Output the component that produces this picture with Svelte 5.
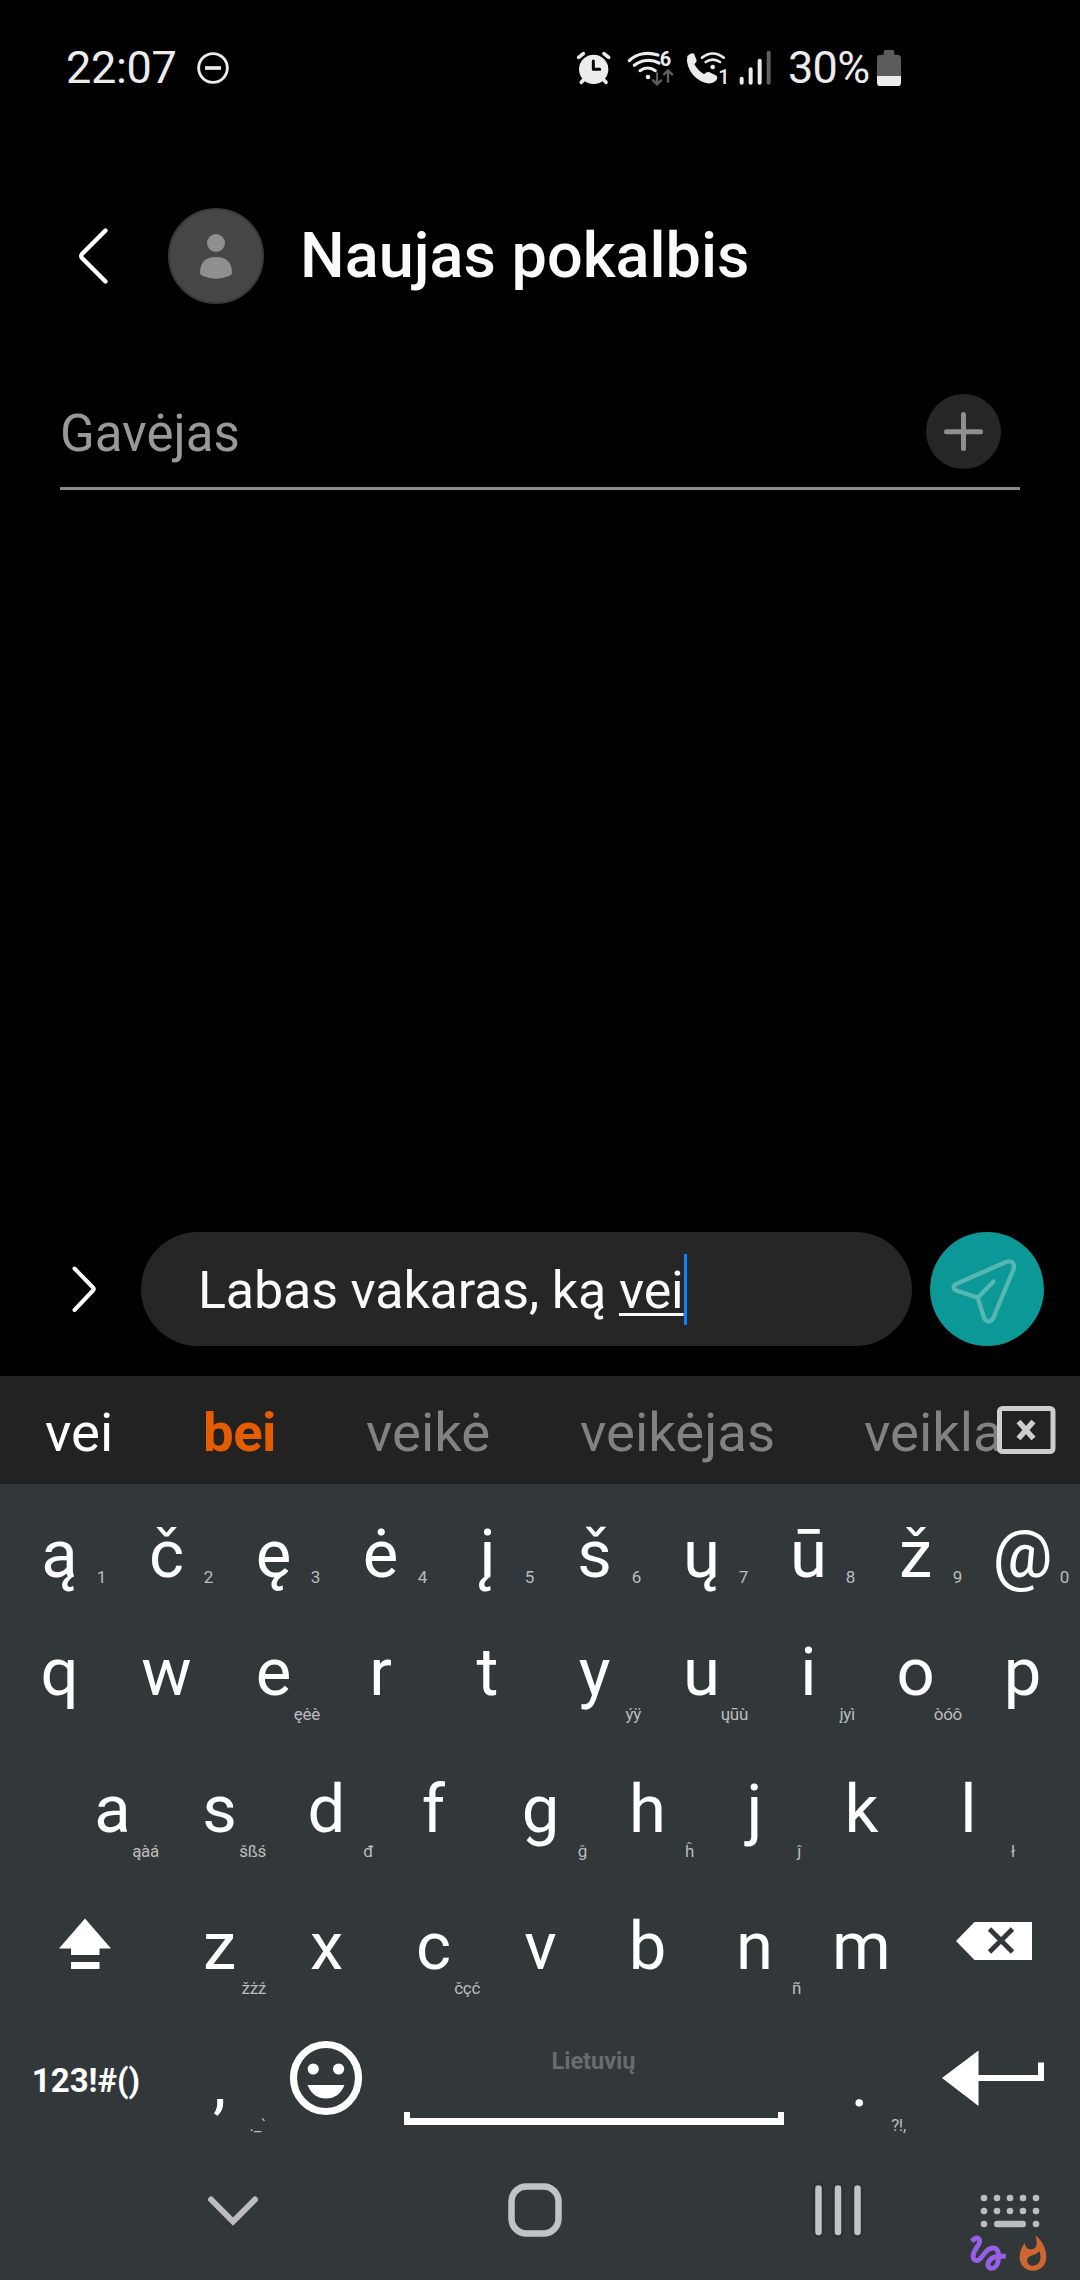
<script>
  const rows = [
    {
      name: 'accents',
      keys: [['ą', '1'], ['č', '2'], ['ę', '3'], ['ė', '4'], ['į', '5'], ['š', '6'], ['ų', '7'], ['ū', '8'], ['ž', '9'], ['@', '0']]
    },
    {
      name: 'top',
      keys: [['q'], ['w'], ['e', 'ęėè'], ['r'], ['t'], ['y', 'ýÿ'], ['u', 'ųūù'], ['i', 'įyì'], ['o', 'òóô'], ['p']]
    },
    {
      name: 'home',
      keys: [['a', 'ąàá'], ['s', 'šßś'], ['d', 'đ'], ['f'], ['g', 'ĝ'], ['h', 'ĥ'], ['j', 'ĵ'], ['k'], ['l', 'ł']]
    }
  ];
  const lower = [['z', 'žżź'], ['x'], ['c', 'čçć'], ['v'], ['b'], ['n', 'ñ'], ['m']];
  const dots = [0, 1, 2, 3, 4];
</script>

{#snippet key(label, hint)}
  <div class="key">
    <span class="letter">{label}</span>
    {#if hint}<span class="hint">{hint}</span>{/if}
  </div>
{/snippet}

<div class="screen">
  <header class="status">
    <span class="time">22:07</span>
    <svg width="45" height="80" viewBox="450 0 135 240">
      <circle cx="519" cy="114" r="43" fill="none" stroke="#ececec" stroke-width="8.5" />
      <path d="M495 114H543" stroke="#ececec" stroke-width="11" />
    </svg>
    <div class="status-right">
      <!-- alarm -->
      <svg width="50" height="80" viewBox="30 0 150 240" fill="none" stroke="#ececec" stroke-linecap="round">
        <circle cx="101" cy="118" r="44" fill="#ececec" stroke="none" />
        <path d="M56 82L70 71M146 82L132 71M64 157L74 146M138 157L128 146" stroke-width="11" />
        <path d="M100 93V118H119" stroke="#000" stroke-width="9" stroke-linejoin="round" />
      </svg>
      <!-- wifi 6 -->
      <svg width="60" height="80" viewBox="180 0 180 240" fill="none" stroke="#ececec" stroke-width="9.5" stroke-linecap="round">
        <path d="M208 92C232 68 266 66 294 75M223 106C243 90 274 86 297 99M240 122C254 112 272 112 286 122" />
        <circle cx="264" cy="141" r="7" fill="#ececec" stroke="none" />
        <text class="six" x="299" y="108" fill="#ececec" stroke="none">6</text>
        <path d="M291 130V162M279 151L291 163L303 151M324 155V122M312 133L324 121L336 133" stroke="#5f5f5f" stroke-width="7" />
      </svg>
      <!-- wifi calling -->
      <svg width="55" height="80" viewBox="360 0 165 240" fill="none" stroke="#ececec" stroke-linecap="round">
        <path d="M382 78Q394 66 402 71L410 91Q411 97 403 103Q413 121 432 133Q440 124 447 126L470 137Q476 145 464 155Q448 166 423 154Q395 139 384 108Q379 92 382 78Z" fill="#ececec" stroke="none" />
        <path d="M426 83Q458 58 491 83M437 96Q458 82 480 96" stroke-width="8" />
        <circle cx="458" cy="111" r="7" fill="#ececec" stroke="none" />
        <text class="one" x="475" y="162" fill="#ececec" stroke="none">1</text>
      </svg>
      <!-- signal -->
      <svg width="50" height="80" viewBox="525 0 150 240" fill="none" stroke="#ececec" stroke-width="12" stroke-linecap="round">
        <path d="M545 146V158M572 118V158M599 92V158" />
        <path d="M626 68V158" stroke="#5f5f5f" />
      </svg>
      <span class="percent">30%</span>
      <svg width="40" height="80" viewBox="930 0 120 240">
        <path d="M976 60H998Q1003 60 1003 66V74H1012Q1023 74 1023 85V140H951V85Q951 74 962 74H971V66Q971 60 976 60Z" fill="#5b5b5b" />
        <path d="M951 138H1023V158Q1023 168 1013 168H961Q951 168 951 158Z" fill="#ececec" />
      </svg>
    </div>
  </header>

  <div class="title-bar">
    <svg class="back" width="36" height="64" viewBox="0 0 36 64" fill="none" stroke="#fafafa" stroke-width="4.4" stroke-linecap="round" stroke-linejoin="round">
      <path d="M30.500 6.500L7 30Q5.500 32 7 34L30.500 57.500" />
    </svg>
    <svg class="avatar" width="96" height="96" viewBox="0 0 96 96">
      <circle cx="48" cy="48" r="47" fill="#464646" stroke="#3a3a3a" stroke-width="2" />
      <circle cx="48" cy="35" r="9" fill="#8f8f8f" />
      <path d="M32 65Q32 49 48 49Q64 49 64 65Q64 67 61 68Q48 73.500 35 68Q32 67 32 65Z" fill="#8f8f8f" />
    </svg>
    <h1>Naujas pokalbis</h1>
  </div>

  <div class="recipient">
    <span>Gavėjas</span>
    <svg width="75" height="75" viewBox="0 0 75 75">
      <circle cx="37.500" cy="37.500" r="37.500" fill="#262626" />
      <path d="M20.500 37.800H54.500M37.500 20.500V54.500" stroke="#8f8f8f" stroke-width="5" stroke-linecap="round" />
    </svg>
  </div>

  <main></main>

  <div class="compose">
    <svg class="expand" width="34" height="56" viewBox="0 0 34 56" fill="none" stroke="#fafafa" stroke-width="4" stroke-linecap="round" stroke-linejoin="round">
      <path d="M8.500 7.500L27 26.500Q28.500 28 27 29.500L8.500 49" />
    </svg>
    <div class="field"><span class="text">Labas vakaras, ką <u>vei</u></span><i class="caret"></i></div>
    <svg class="send" width="114" height="114" viewBox="150 66 342 342">
      <circle cx="321" cy="237" r="171" fill="#0c9896" />
      <path d="M293 263L230 242Q212 233 230 221L378 156Q406 148 401 177L339 326Q326 343 313 326ZL340 215" fill="none" stroke="#55b7b5" stroke-width="13" stroke-linecap="round" stroke-linejoin="round" />
    </svg>
  </div>

  <section class="keyboard">
    <div class="suggestions">
      <span class="typed">vei</span>
      <b>bei</b>
      <span class="s3">veikė</span>
      <span class="s4">veikėjas</span>
      <span class="s5">veikla</span>
      <svg width="60" height="50" viewBox="0 0 60 50" fill="none" stroke="#cecece">
        <rect x="3.500" y="3.500" width="53.500" height="43" rx="3" fill="#222" stroke-width="5" />
        <path d="M22.500 16.500L37.500 33.500M37.500 16.500L22.500 33.500" stroke-width="5.500" />
      </svg>
    </div>

    {#each rows as row}
      <div class="row {row.name}">
        {#each row.keys as [label, hint]}
          {@render key(label, hint)}
        {/each}
      </div>
    {/each}

    <div class="row lower">
      <div class="wide">
        <svg class="shift" width="54" height="52" viewBox="0 0 54 52" fill="#fff">
          <path d="M27 0.500L53 30.500H41.500V37H13V30.500H1Z" />
          <rect x="13" y="44" width="28.500" height="7" />
        </svg>
      </div>
      {#each lower as [label, hint]}
        {@render key(label, hint)}
      {/each}
      <div class="wide">
        <svg class="erase" width="76" height="40" viewBox="0 0 76 40">
          <path d="M0 20L18.500 1H76V39H18.500Z" fill="#fff" />
          <path d="M33.500 8L56.500 31M56.500 8L33.500 31" stroke="#32373a" stroke-width="4.800" />
        </svg>
      </div>
    </div>

    <div class="row bottom">
      <div class="wide symbols">123!#()</div>
      {@render key(',', '._`')}
      <div class="key emoji">
        <svg width="74" height="76" viewBox="0 0 74 76">
          <ellipse cx="37" cy="38" rx="32.500" ry="33.500" fill="none" stroke="#fff" stroke-width="7.200" />
          <circle cx="24.200" cy="29" r="5.600" fill="#fff" />
          <circle cx="49.600" cy="29" r="5.600" fill="#fff" />
          <path d="M18.500 45H55.500Q50 58.500 37 58.500Q24 58.500 18.500 45Z" fill="#fff" />
        </svg>
      </div>
      <div class="space"><span>Lietuvių</span><i></i></div>
      {@render key('.', '?!,')}
      <div class="wide enter">
        <svg width="104" height="56" viewBox="0 0 104 56" fill="#fff">
          <path d="M1 28L37.500 0.500V25H97V12.500H103V31H37.500V56Z" />
        </svg>
      </div>
    </div>

    <nav>
      <svg class="hide" width="54" height="40" viewBox="0 0 54 40" fill="none" stroke="#bdbdbf" stroke-width="6" stroke-linecap="round">
        <path d="M5 8.500L27 30.500L49 8.500" />
      </svg>
      <svg class="home-button" width="60" height="60" viewBox="0 0 60 60" fill="none">
        <rect x="6.500" y="6.500" width="47" height="47" rx="15" stroke="#c2c3c5" stroke-width="6.500" />
      </svg>
      <svg class="recents" width="60" height="60" viewBox="0 0 60 60" fill="none" stroke-linecap="round">
        <path d="M10.500 8.500V52M30 8.500V52M49.500 8.500V52" stroke="#2c3134" stroke-width="12" />
        <path d="M10.500 8.500V52M30 8.500V52M49.500 8.500V52" stroke="#c2c3c5" stroke-width="6.500" />
      </svg>
      <div class="corner">
        <svg class="dots" width="60" height="34" viewBox="0 0 60 34" fill="#bdbdbf">
          {#each dots as i}
            <circle cx={4 + 13 * i} cy="4" r="3.300" />
            <circle cx={4 + 13 * i} cy="17" r="3.300" />
          {/each}
          <circle cx="4" cy="30" r="3.300" />
          <circle cx="56" cy="30" r="3.300" />
          <rect x="14" y="26.700" width="32" height="6.600" rx="3.300" />
        </svg>
        <div class="tools">
          <svg width="36" height="36" viewBox="2.800 2.800 18.300 18.300" fill="#965fe6">
            <path d="M4.590 6.890c.7-.71 1.400-1.350 1.710-1.220.5.2 0 1.030-.3 1.520-.25.42-2.860 3.890-2.860 6.310 0 1.280.48 2.340 1.340 2.980.75.56 1.740.73 2.640.46 1.070-.31 1.950-1.400 3.060-2.770 1.210-1.490 2.830-3.440 4.080-3.440 1.630 0 1.650 1.010 1.760 1.790-3.780.64-5.380 3.670-5.380 5.370 0 1.700 1.440 3.090 3.210 3.090 1.630 0 4.290-1.330 4.690-6.100H21v-2.500h-2.470c-.15-1.650-1.090-4.200-4.030-4.200-2.250 0-4.180 1.910-4.940 2.840-.58.73-2.060 2.480-2.290 2.720-.25.3-.68.84-1.110.84-.45 0-.72-.83-.36-1.920.35-1.090 1.400-2.860 1.850-3.520.78-1.140 1.300-1.920 1.300-3.280C8.950 3.690 7.310 3 6.440 3 5.120 3 3.970 4 3.720 4.250c-.36.36-.66.66-.88.93l1.750 1.710zm9.290 11.660c-.31 0-.74-.26-.74-.72 0-.6.73-2.200 2.870-2.760-.3 2.690-1.430 3.480-2.130 3.480z" />
          </svg>
          <svg width="28" height="36" viewBox="3.800 .5 16.400 21.600" fill="#cd6630">
            <path d="M13.500.67s.74 2.650.74 4.800c0 2.060-1.350 3.730-3.410 3.730-2.070 0-3.630-1.670-3.630-3.730l.03-.36C5.210 7.510 4 10.620 4 14c0 4.420 3.580 8 8 8s8-3.580 8-8C20 8.610 17.410 3.800 13.500.67zM11.710 19c-1.780 0-3.220-1.400-3.220-3.140 0-1.620 1.050-2.760 2.810-3.120 1.770-.36 3.600-1.210 4.620-2.580.39 1.290.59 2.650.59 4.040 0 2.650-2.150 4.800-4.800 4.800z" />
          </svg>
        </div>
      </div>
    </nav>
  </section>
</div>

<style>
  :global(body) {
    background: #000;
  }
  .screen {
    display: flex;
    flex-direction: column;
    width: 1080px;
    height: 2280px;
    overflow: hidden;
    background: #000;
    color: #fafafa;
    font-family: Roboto, sans-serif;
  }
  svg {
    display: block;
    flex: none;
  }
  .status {
    display: flex;
    height: 106px;
    padding: 30px 170px 0 66px;
    color: #ececec;
    font-size: 45px;
    line-height: 75px;
  }
  .time {
    width: 124px;
    letter-spacing: -0.3px;
  }
  .status-right {
    display: flex;
    margin-left: auto;
  }
  .percent {
    box-sizing: border-box;
    width: 85px;
    padding-left: 3px;
    letter-spacing: -0.7px;
    white-space: nowrap;
  }
  .six {
    font-size: 60px;
    font-weight: 700;
  }
  .one {
    font-size: 60px;
    font-weight: 500;
  }
  .title-bar {
    display: flex;
    align-items: center;
    height: 96px;
    padding: 72px 0 0 75px;
  }
  .avatar {
    margin-left: 57px;
  }
  h1 {
    margin: 0 0 0 36px;
    font-size: 63px;
    font-weight: 500;
    line-height: 96px;
    white-space: nowrap;
  }
  .recipient {
    display: flex;
    justify-content: space-between;
    box-sizing: border-box;
    height: 186px;
    margin: 0 60px;
    padding-top: 90px;
    padding-right: 19px;
    border-bottom: 3px solid #8b8b8b;
    color: #999;
    font-size: 51px;
    line-height: 79px;
  }
  main {
    flex: 1;
  }
  .compose {
    display: flex;
    align-items: center;
    height: 114px;
    padding: 0 36px 30px 66px;
  }
  .field {
    display: flex;
    align-items: center;
    box-sizing: border-box;
    width: 771px;
    height: 114px;
    margin: 0 18px 0 41px;
    padding-left: 57px;
    border-radius: 57px;
    background: #262626;
    font-size: 52px;
    line-height: 80px;
    white-space: nowrap;
  }
  .text {
    padding-top: 3px;
    letter-spacing: -0.15px;
  }
  u {
    text-decoration-thickness: 3px;
    text-underline-offset: 5px;
  }
  .caret {
    width: 3px;
    height: 71px;
    background: #0a84ff;
  }
  .keyboard {
    height: 904px;
    background: #32373a;
    color: #fff;
  }
  .suggestions {
    display: flex;
    align-items: center;
    height: 108px;
    padding-left: 45px;
    background: #222;
    color: #828282;
    font-size: 54.5px;
    line-height: 108px;
    white-space: nowrap;
  }
  .suggestions span,
  .suggestions b {
    flex: none;
    padding-top: 3px;
  }
  .typed {
    width: 158px;
    color: #fff;
  }
  b {
    width: 163px;
    color: #e65c00;
    letter-spacing: -0.5px;
  }
  .s3 {
    width: 214px;
  }
  .s4 {
    width: 284px;
  }
  .s5 {
    width: 132px;
  }
  .row {
    display: flex;
    height: 137px;
    padding: 0 6px;
  }
  .accents {
    height: 129px;
  }
  .home {
    padding: 0 59px;
  }
  .key {
    display: grid;
    flex: none;
    width: 107px;
    height: 100%;
  }
  .letter {
    grid-area: 1 / 1;
    place-self: end center;
    margin-bottom: 38px;
    font-size: 67px;
    line-height: 80px;
  }
  .accents .letter {
    margin-bottom: 19px;
  }
  .hint {
    grid-area: 1 / 1;
    place-self: end;
    margin: 0 7px 26px 0;
    color: #bbbcbd;
    font-size: 17px;
    line-height: 20px;
    letter-spacing: -0.3px;
  }
  .wide {
    flex: none;
    width: 160px;
  }
  .shift {
    margin: 31px 0 0 52px;
  }
  .erase {
    margin: 34px 0 0 41px;
  }
  .symbols {
    width: 160px;
    font-size: 33px;
    font-weight: 700;
    line-height: 113px;
    text-align: center;
  }
  .emoji svg {
    margin: 16px 0 0 16px;
  }
  .space {
    display: flex;
    flex-direction: column;
    justify-content: space-between;
    align-items: center;
    box-sizing: border-box;
    width: 426px;
    height: 101px;
    padding: 23px 22px 0 23px;
    color: #696b6c;
    font-size: 23.5px;
    font-weight: 700;
    line-height: 28px;
  }
  .space i {
    box-sizing: border-box;
    width: 380px;
    height: 13px;
    border: solid #fff;
    border-width: 0 6px 7px;
  }
  .enter svg {
    margin: 26px 0 0 28px;
  }
  nav {
    display: flex;
    height: 119px;
    padding-left: 206px;
  }
  .hide {
    margin-top: 30px;
  }
  .home-button {
    margin: 19px 0 0 245px;
  }
  .recents {
    margin: 19px 0 0 243px;
  }
  .corner {
    margin: 33px 0 0 102px;
  }
  .dots {
    margin-left: 10px;
  }
  .tools {
    display: flex;
    gap: 13px;
    margin-top: 7px;
  }
</style>
